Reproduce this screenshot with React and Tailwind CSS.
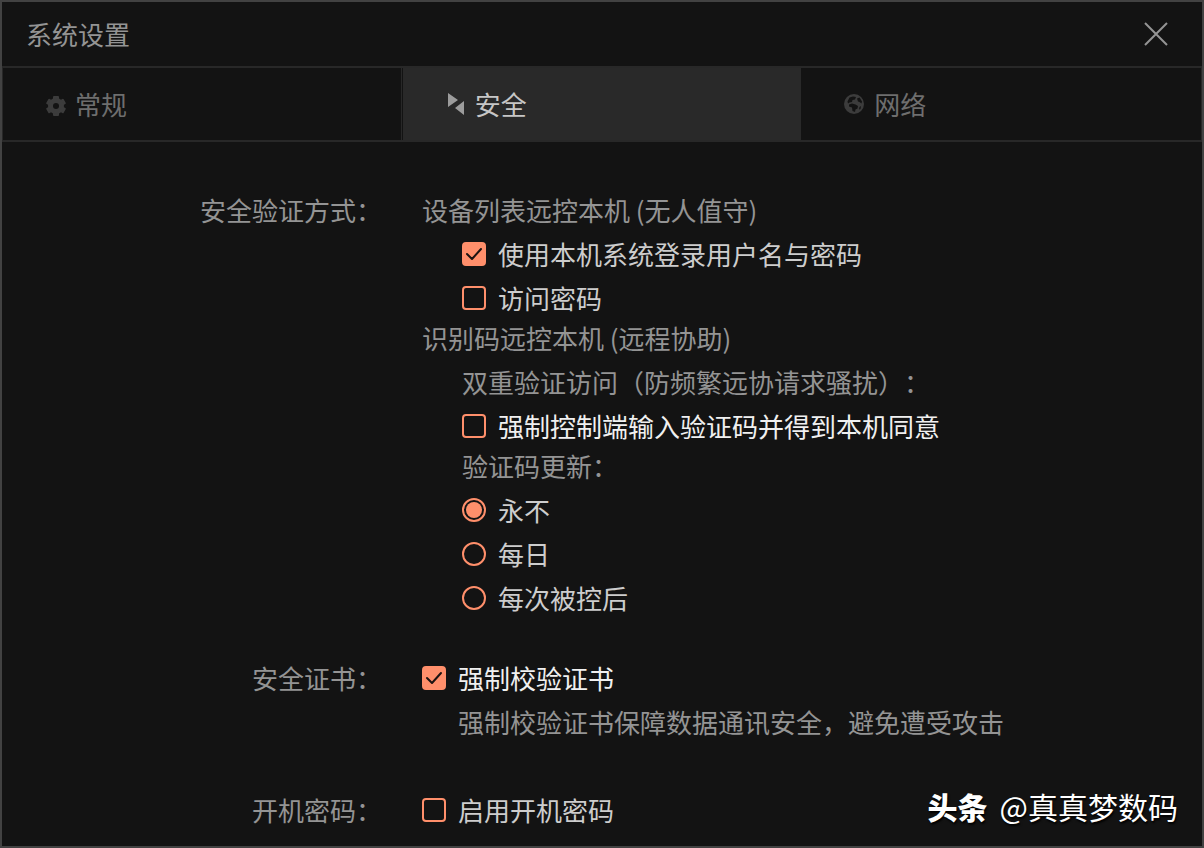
import React, { useState } from "react";

function GearIcon() {
  return (
    <svg viewBox="0 0 24 24" className="w-6 h-6 fill-[#3c3c3c]">
      <rect x="10" y="4" width="6" height="20" rx="1" />
      <rect x="10" y="4" width="6" height="20" rx="1" transform="rotate(60 13 14)" />
      <rect x="10" y="4" width="6" height="20" rx="1" transform="rotate(120 13 14)" />
      <circle cx="13" cy="14" r="8" />
      <circle cx="13" cy="14" r="3" className="fill-[#131313]" />
    </svg>
  );
}

function SecurityIcon() {
  return (
    <svg viewBox="0 0 20 24" className="w-5 h-6 fill-[#9c9c9c]">
      <path d="M3 1v14l10-7zM19 9v14l-9-7z" />
    </svg>
  );
}

function GlobeIcon() {
  return (
    <svg viewBox="0 0 40 40" className="w-5 h-5">
      <circle cx="20" cy="20" r="20" className="fill-[#3c3c3c]" />
      <path
        className="fill-[#131313]"
        d="M11 7l7-2 6 1-2 5-5 1-1 4-5 1-3 2-1-4zM26 9l5-2 5 8-1 4-4-3-3-1zM10 21l6-2 7 2 5 3-1 5-4 2-1 5-5-2-1-7-6-2zM31 26l3-2-1 6-3 1z"
      />
    </svg>
  );
}

const tabs = [
  { id: "general", label: "常规", icon: <GearIcon /> },
  { id: "security", label: "安全", icon: <SecurityIcon /> },
  { id: "network", label: "网络", icon: <GlobeIcon /> },
];

const updateModes = ["永不", "每日", "每次被控后"];

function Check({ label, defaultChecked, textClass = "text-[#cdcdcd]" }) {
  return (
    <label className={`flex items-center h-10 gap-3 mt-1 ${textClass}`}>
      <span className="grid w-6 h-6 shrink-0">
        <input
          type="checkbox"
          defaultChecked={defaultChecked}
          className="w-6 h-6 border-2 border-[#ff8f6b] rounded appearance-none peer [grid-area:1/1] checked:bg-[#ff8f6b]"
        />
        <svg
          viewBox="0 0 24 24"
          className="w-6 h-6 invisible pointer-events-none [grid-area:1/1] peer-checked:visible"
          fill="none"
          stroke="#1c1311"
          strokeWidth="2"
          strokeLinecap="round"
          strokeLinejoin="round"
        >
          <path d="M5 12l5 5 9-10" />
        </svg>
      </span>
      <span>{label}</span>
    </label>
  );
}

function Section({ title, children, className = "" }) {
  return (
    <section className={`flex gap-10 ${className}`}>
      <h2 className="flex items-center justify-end h-10 w-95 shrink-0">{title}</h2>
      <div className="flex-1 min-w-0">{children}</div>
    </section>
  );
}

export default function App() {
  const [active, setActive] = useState("security");
  const [mode, setMode] = useState("永不");

  return (
    <div className="relative min-h-screen border-2 border-[#424242] bg-[#131313] text-[#949494] text-[26px] leading-10 font-['Noto_Sans_CJK_SC',sans-serif] [text-spacing-trim:space-all]">
      <header className="flex items-center justify-between h-16 px-6">
        <h1>系统设置</h1>
        <button type="button" aria-label="关闭" className="mr-[10px]">
          <svg viewBox="0 0 24 24" className="w-6 h-6" fill="none" stroke="currentColor" strokeWidth="2">
            <path d="M1 1l22 22M23 1L1 23" />
          </svg>
        </button>
      </header>

      {/* Tabs */}
      <nav className="grid grid-cols-3 gap-px border-x border-y-2 border-[#282828]">
        {tabs.map((tab) => (
          <button
            key={tab.id}
            type="button"
            onClick={() => setActive(tab.id)}
            className={`flex items-center h-18 gap-2 pl-10 ${
              active === tab.id
                ? "bg-[#292929] text-[#c6c6c6]"
                : "text-[#6e6e6e] border-r border-[#282828] last:border-r-0"
            }`}
          >
            <span className="flex items-center justify-center w-6 h-6">{tab.icon}</span>
            {tab.label}
          </button>
        ))}
      </nav>

      <main className="pt-12">
        <Section title="安全验证方式：">
          <h3>设备列表远控本机 (无人值守)</h3>
          <div className="pl-10">
            <Check label="使用本机系统登录用户名与密码" defaultChecked />
            <Check label="访问密码" />
          </div>
          <h3>识别码远控本机 (远程协助)</h3>
          <div className="pl-10">
            <p className="mt-1">双重验证访问（防频繁远协请求骚扰）：</p>
            <Check label="强制控制端输入验证码并得到本机同意" textClass="text-[#f0f0f0]" />
            <p>验证码更新：</p>
            {updateModes.map((item) => (
              <label key={item} className="flex items-center h-10 gap-3 mt-1 text-[#cdcdcd]">
                <input
                  type="radio"
                  name="update-mode"
                  checked={mode === item}
                  onChange={() => setMode(item)}
                  className="w-6 h-6 p-0.5 border-2 border-[#ff8f6b] rounded-full appearance-none bg-clip-content checked:bg-[#ff8f6b]"
                />
                <span>{item}</span>
              </label>
            ))}
          </div>
        </Section>

        <Section title="安全证书：" className="mt-10">
          <div className="-mt-1">
            <Check label="强制校验证书" defaultChecked textClass="text-[#f0f0f0]" />
          </div>
          <p className="pl-9 mt-1">强制校验证书保障数据通讯安全，避免遭受攻击</p>
        </Section>

        <Section title="开机密码：" className="mt-12">
          <div className="-mt-1">
            <Check label="启用开机密码" />
          </div>
        </Section>
      </main>

      {/* Watermark */}
      <div className="absolute flex items-center gap-3 text-white bottom-5 right-6 text-[30px] [text-shadow:1px_2px_2px_#000]">
        <span className="font-black">头条</span>
        <span>@真真梦数码</span>
      </div>
    </div>
  );
}
